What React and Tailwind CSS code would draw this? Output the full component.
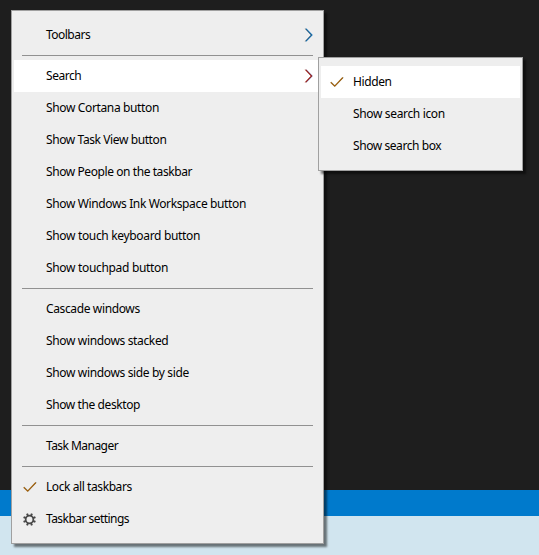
import React from 'react';

function Chevron({ left, core, right }) {
  return (
    <svg className="mr-[7px] h-[14px] w-[10px] shrink-0" viewBox="0 0 10 14" fill="none">
      <path d="M1 0.7 L7.1 7 L1 13.3" stroke={left} strokeWidth="0.8" />
      <path d="M2.3 0.7 L8.4 7 L2.3 13.3" stroke={right} strokeWidth="0.8" />
      <path d="M1.6 0.7 L7.7 7 L1.6 13.3" stroke={core} strokeWidth="1.15" />
    </svg>
  );
}

function Check() {
  return (
    <svg className="h-[12px] w-[14px]" viewBox="0 0 14 12" fill="none">
      <path d="M1.5 6.4 L5.2 10 L13.4 1.5" stroke="#5a9ad0" strokeWidth="0.7" />
      <path d="M0.7 6.3 L4.7 10.1 L12.9 1.5" stroke="#a0600c" strokeWidth="1.3" />
    </svg>
  );
}

function Gear() {
  return (
    <svg className="h-[13px] w-[13px]" viewBox="-6.5 -6.5 13 13" fill="none" stroke="#484848">
      <circle r="3.8" strokeWidth="1.7" />
      {[22.5, 67.5, 112.5, 157.5, 202.5, 247.5, 292.5, 337.5].map((a) => (
        <path key={a} d="M0 -4 V-6.4" strokeWidth="2" transform={`rotate(${a})`} />
      ))}
    </svg>
  );
}

function Row({ label, tracking = 'tracking-[-0.4px]', icon, arrow, active }) {
  return (
    <div className={`mx-[2px] flex h-8 items-center ${active ? 'bg-white' : ''}`}>
      <div className="flex w-8 shrink-0 items-center justify-center pr-px">{icon}</div>
      <span className={`flex-1 whitespace-nowrap ${tracking}`}>{label}</span>
      {arrow}
    </div>
  );
}

function Separator() {
  return <div className="mx-[10px] my-1 h-px bg-[#919191]" />;
}

const menuClass =
  'absolute border border-[#a0a0a0] bg-[#eeeeee] py-2 shadow-[3px_3px_2px_rgba(0,0,0,0.5)]';

export default function App() {
  return (
    <div className="relative flex h-[555px] w-[539px] flex-col overflow-hidden bg-[#1e1e1e] font-['Noto_Sans','Open_Sans',sans-serif] text-[12px] leading-4 text-black">
      <div className="flex-1" />
      <div className="h-[26px] bg-[#007acc]" />
      <div className="h-[39px] bg-[#d1e5ef]" />

      <div className={`${menuClass} top-[10px] left-[11px] w-[313px]`}>
        <Row label="Toolbars" tracking="tracking-[-0.52px]" arrow={<Chevron left="#e8b080" core="#10609c" right="#60b0e8" />} />
        <Separator />
        <Row active label="Search" tracking="tracking-[-0.45px]" arrow={<Chevron left="#e8a070" core="#901c24" right="#80b8f0" />} />
        <Row label="Show Cortana button" tracking="tracking-[-0.36px]" />
        <Row label="Show Task View button" tracking="tracking-[-0.4px]" />
        <Row label="Show People on the taskbar" tracking="tracking-[-0.42px]" />
        <Row label="Show Windows Ink Workspace button" tracking="tracking-[-0.37px]" />
        <Row label="Show touch keyboard button" tracking="tracking-[-0.33px]" />
        <Row label="Show touchpad button" tracking="tracking-[-0.32px]" />
        <Separator />
        <Row label="Cascade windows" tracking="tracking-[-0.37px]" />
        <Row label="Show windows stacked" tracking="tracking-[-0.35px]" />
        <Row label="Show windows side by side" tracking="tracking-[-0.35px]" />
        <Row label="Show the desktop" tracking="tracking-[-0.4px]" />
        <Separator />
        <Row label="Task Manager" tracking="tracking-[-0.54px]" />
        <Separator />
        <Row label="Lock all taskbars" tracking="tracking-[-0.42px]" icon={<Check />} />
        <Row label="Taskbar settings" tracking="tracking-[-0.54px]" icon={<Gear />} />
      </div>

      <div className={`${menuClass} top-[57px] left-[318px] w-[205px]`}>
        <Row active label="Hidden" tracking="tracking-[-0.4px]" icon={<Check />} />
        <Row label="Show search icon" tracking="tracking-[-0.35px]" />
        <Row label="Show search box" tracking="tracking-[-0.43px]" />
      </div>
    </div>
  );
}
